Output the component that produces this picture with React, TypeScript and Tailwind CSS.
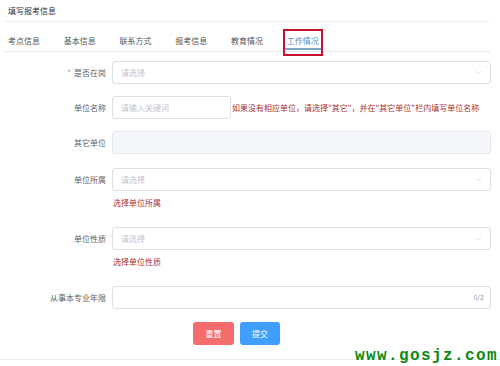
import { ChevronDown } from 'lucide-react'

const tabs = ['考点信息', '基本信息', '联系方式', '报考信息', '教育情况', '工作情况']

function Label({ children, required }: { children: React.ReactNode; required?: boolean }) {
  return (
    <div className="w-[106px] shrink-0 text-right leading-[12px] text-[#606266]">
      {required && <span className="mr-[3px] text-[#909399]">*</span>}
      {children}
    </div>
  )
}

function SelectBox() {
  return (
    <div className="ml-[6px] mr-[9px] flex h-[23px] flex-1 items-center justify-between rounded-[3px] border border-[#dcdfe6] bg-white pl-[8px] pr-[7px]">
      <span className="text-[#c0c4cc]">请选择</span>
      <ChevronDown size={9} strokeWidth={1.5} className="text-[#c0c4cc]" />
    </div>
  )
}

export default function App() {
  return (
    <div className="relative h-[366px] w-[500px] overflow-hidden bg-white font-['Noto_Sans_CJK_SC','Liberation_Sans',sans-serif] text-[8px] text-[#606266]">
      <div className="ml-[5px] mr-[10px]">
        <div className="flex h-[22px] items-center border-b border-[#ebeef5] pl-[3px] text-[#303133]">
          填写报考信息
        </div>
        <div className="flex h-[30px] gap-[23.75px] border-b border-[#e4e7ed] pl-[3px]">
          {tabs.map((t, i) => {
            const active = i === tabs.length - 1
            return (
              <div key={t} className="relative flex flex-col items-center pt-[13px]">
                <span className={`leading-[12px] ${active ? 'text-[#5b8fc4]' : 'text-[#555]'}`}>{t}</span>
                {active && (
                  <>
                    <div className="-mx-[2px] mt-[1px] h-[2px] w-[calc(100%+4px)] bg-[#7fa6c8]" />
                    <div className="absolute -left-[4px] -right-[4px] top-[7px] h-[27px] border-2 border-[#c8102e]" />
                  </>
                )}
              </div>
            )
          })}
        </div>
      </div>

      <div className="flex flex-col">
        <div className="mt-[9px] flex items-center">
          <Label required>是否在岗</Label>
          <SelectBox />
        </div>

        <div className="mt-[12px] flex items-center">
          <Label>单位名称</Label>
          <div className="ml-[6px] flex h-[23px] w-[119px] items-center rounded-[3px] border border-[#dcdfe6] pl-[8px] text-[#c0c4cc]">
            请输入关键词
          </div>
          <span className="ml-[1px] text-[#a8302f]">
            如果没有相应单位，请选择"其它"，并在"其它单位"栏内填写单位名称
          </span>
        </div>

        <div className="mt-[12px] flex items-center">
          <Label>其它单位</Label>
          <div className="ml-[6px] mr-[9px] h-[23px] flex-1 rounded-[3px] border border-[#e4e7ed] bg-[#f5f7fa]" />
        </div>

        <div className="mt-[14px] flex items-center">
          <Label>单位所属</Label>
          <SelectBox />
        </div>
        <div className="mt-[6px] pl-[113px] leading-[12px] text-[#a8302f]">选择单位所属</div>

        <div className="mt-[18px] flex items-center">
          <Label>单位性质</Label>
          <SelectBox />
        </div>
        <div className="mt-[6px] pl-[113px] leading-[12px] text-[#a8302f]">选择单位性质</div>

        <div className="mt-[18px] flex items-center">
          <Label>从事本专业年限</Label>
          <div className="ml-[6px] mr-[9px] flex h-[23px] flex-1 items-center justify-end rounded-[3px] border border-[#dcdfe6] pr-[6px] text-[7px] text-[#909399]">
            0/2
          </div>
        </div>

        <div className="mt-[13px] flex gap-[6px] pl-[193px]">
          <button className="h-[23px] w-[41px] rounded-[3px] bg-[#f56c6c] text-[8px] text-white">重置</button>
          <button className="h-[23px] w-[40px] rounded-[3px] bg-[#409eff] text-[8px] text-white">提交</button>
        </div>

        <div className="mt-[14px] border-t border-[#ebeef5]" />
      </div>

      <div className="absolute bottom-[2px] right-[2px] font-['Liberation_Mono',monospace] text-[16px] font-bold leading-[16px] tracking-[1.4px] text-[#0b8a12]">
        www.gosjz.com
      </div>
    </div>
  )
}
